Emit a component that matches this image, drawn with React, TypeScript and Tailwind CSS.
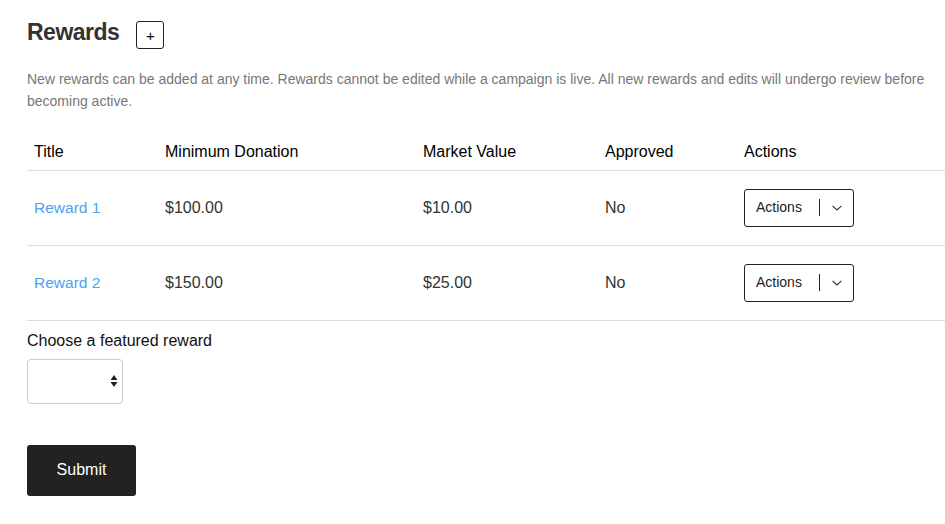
import React from "react";

const rows = [
  { title: "Reward 1", min: "$100.00", market: "$10.00", approved: "No" },
  { title: "Reward 2", min: "$150.00", market: "$25.00", approved: "No" },
];

function ActionsButton() {
  return (
    <button className="flex h-[38px] w-[110px] items-center rounded-[3px] border border-[#222] bg-white pl-[11px] text-[14px] text-[#222]">
      <span>Actions</span>
      <span className="ml-[17px] h-[17px] w-px bg-[#222]" />
      <svg className="ml-[11px]" width="12" height="8" viewBox="0 0 12 8" fill="none">
        <path d="M1.5 1.8 L6 6 L10.5 1.8" stroke="#333" strokeWidth="1.1" />
      </svg>
    </button>
  );
}

export default function App() {
  return (
    <div
      className="min-h-[524px] w-[945px] overflow-hidden bg-white pl-[27px] pt-[17px]"
      style={{ fontFamily: '"Liberation Sans", Arial, sans-serif' }}
    >
      <div className="flex items-start">
        <h1 className="text-[23px] font-bold leading-[30px] tracking-[-0.5px] text-[#333]">Rewards</h1>
        <button className="ml-[17px] mt-[4px] flex h-[28px] w-[28px] items-center justify-center rounded-[3px] border border-[#222] text-[15px] leading-none text-[#000]">
          +
        </button>
      </div>
      <p className="mt-[19px] w-[905px] text-[14px] leading-[22px] text-[#777]">
        New rewards can be added at any time. Rewards cannot be edited while a campaign is live. All new rewards and
        edits will undergo review before becoming active.
      </p>
      <table className="mt-[22px] w-[918px] table-fixed border-collapse text-left">
        <colgroup>
          <col className="w-[131px]" />
          <col className="w-[258px]" />
          <col className="w-[182px]" />
          <col className="w-[139px]" />
          <col className="w-[208px]" />
        </colgroup>
        <thead>
          <tr className="h-[36px] border-b border-[#ddd]">
            <th className="px-[7px] pt-[1px] text-[16px] font-medium text-black">Title</th>
            <th className="px-[7px] pt-[1px] text-[16px] font-medium text-black">Minimum Donation</th>
            <th className="px-[7px] pt-[1px] text-[16px] font-medium text-black">Market Value</th>
            <th className="px-[7px] pt-[1px] text-[16px] font-medium text-black">Approved</th>
            <th className="px-[7px] pt-[1px] text-[16px] font-medium text-black">Actions</th>
          </tr>
        </thead>
        <tbody>
          {rows.map((r) => (
            <tr key={r.title} className="h-[75px] border-b border-[#ddd]">
              <td className="px-[7px] text-[15.5px] text-[#4aa3f0]">{r.title}</td>
              <td className="px-[7px] text-[16px] text-[#333]">{r.min}</td>
              <td className="px-[7px] text-[16px] text-[#333]">{r.market}</td>
              <td className="px-[7px] text-[16px] text-[#333]">{r.approved}</td>
              <td className="px-[7px]">
                <ActionsButton />
              </td>
            </tr>
          ))}
        </tbody>
      </table>
      <div className="mt-[10px] text-[16px] leading-[20px] text-[#111]">Choose a featured reward</div>
      <div className="mt-[8px] flex h-[45px] w-[96px] items-center justify-end rounded-[4px] border border-[#ccc] pr-[4px]">
        <svg width="8" height="14" viewBox="0 0 8 14">
          <path d="M4 1 L7.5 6 L0.5 6 Z" fill="#222" />
          <path d="M4 13 L7.5 8 L0.5 8 Z" fill="#222" />
        </svg>
      </div>
      <button className="mt-[41px] flex h-[51px] w-[109px] items-center justify-center rounded-[3px] bg-[#222] text-[16px] font-medium text-white">
        Submit
      </button>
    </div>
  );
}
